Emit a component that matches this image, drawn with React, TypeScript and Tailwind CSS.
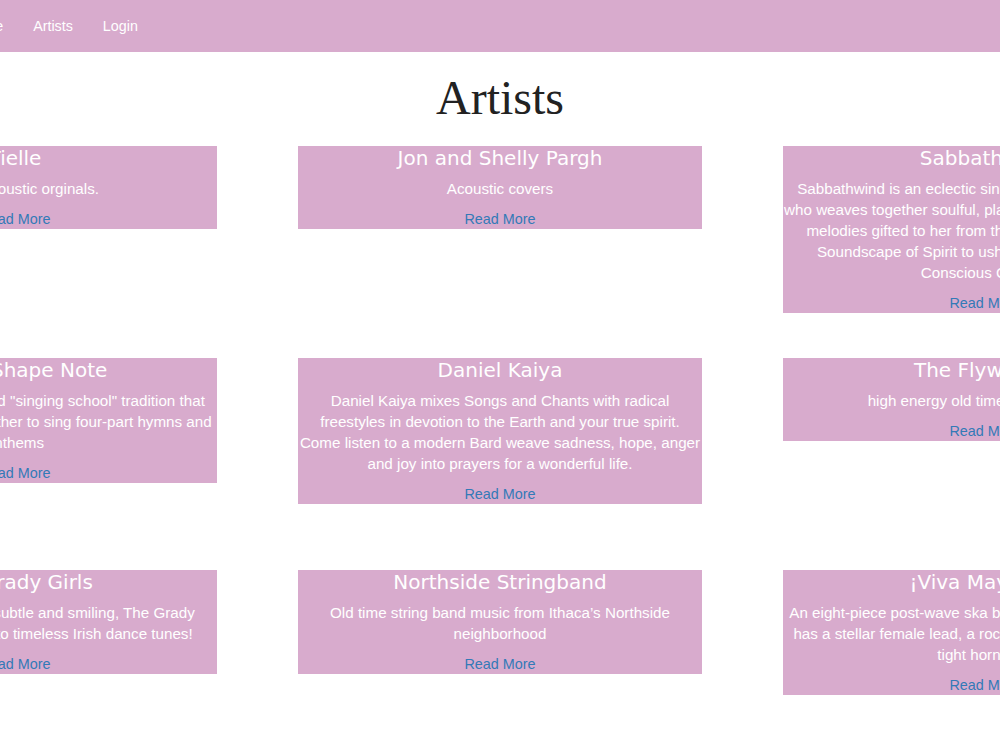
import React from 'react'

type Artist = {
  name: string
  lines: string[]
}

const artists: Artist[] = [
  { name: 'Tielle', lines: ['Soulful acoustic orginals.'] },
  { name: 'Jon and Shelly Pargh', lines: ['Acoustic covers'] },
  {
    name: 'Sabbathwind',
    lines: [
      'Sabbathwind is an eclectic singer-songwriter and healer',
      'who weaves together soulful, playful, and heartfelt medicine',
      'melodies gifted to her from the Divine Mother into the',
      'Soundscape of Spirit to usher in a bold new era of',
      'Conscious Culture.',
    ],
  },
  {
    name: 'Ithaca Shape Note',
    lines: [
      'Carrying on a 200-year-old "singing school" tradition that',
      'brings the community together to sing four-part hymns and',
      'anthems',
    ],
  },
  {
    name: 'Daniel Kaiya',
    lines: [
      'Daniel Kaiya mixes Songs and Chants with radical',
      'freestyles in devotion to the Earth and your true spirit.',
      'Come listen to a modern Bard weave sadness, hope, anger',
      'and joy into prayers for a wonderful life.',
    ],
  },
  { name: 'The Flywheels', lines: ['high energy old time country music'] },
  {
    name: 'The Grady Girls',
    lines: [
      'Lilting, lovely, sprightly, subtle and smiling, The Grady',
      'Girls breathe new life into timeless Irish dance tunes!',
    ],
  },
  {
    name: 'Northside Stringband',
    lines: ['Old time string band music from Ithaca\u2019s Northside', 'neighborhood'],
  },
  {
    name: '\u00a1Viva Mayhem!',
    lines: [
      'An eight-piece post-wave ska band from Ithaca, NY, which',
      'has a stellar female lead, a rock-solid rhythm section and',
      'tight horn line.',
    ],
  },
]

function ArtistCard({ artist }: { artist: Artist }) {
  return (
    <div className="bg-[#d8abcd] text-center text-white">
      <h3 className="font-['DejaVu_Sans',Verdana,sans-serif] text-[20px] leading-[24px] whitespace-nowrap">
        {artist.name}
      </h3>
      <p className="mt-[8px] mb-[10px] font-['Liberation_Sans',Arial,sans-serif] text-[15.2px] leading-[21px] whitespace-nowrap">
        {artist.lines.map((l, i) => (
          <React.Fragment key={i}>
            {l}
            {i < artist.lines.length - 1 && <br />}
          </React.Fragment>
        ))}
      </p>
      <a href="#" className="block font-['Liberation_Sans',Arial,sans-serif] text-[14.4px] leading-[20px] text-[#337ab7]">
        Read More
      </a>
    </div>
  )
}

export default function App() {
  return (
    <div className="min-h-screen w-full overflow-hidden bg-white">
      {/* top nav */}
      <nav className="h-[52px] bg-[#d8abcd] flex items-center font-['Liberation_Sans',Arial,sans-serif] text-[14.3px] text-white">
        <ul className="flex ml-[-50px] mt-[2px]">
          <li className="px-[15px]">Home</li>
          <li className="px-[15px]">Artists</li>
          <li className="px-[15px]">Login</li>
        </ul>
      </nav>

      <h1 className="mt-[19px] mb-[22px] text-center font-['Liberation_Serif','Times_New_Roman',serif] text-[48px] leading-[53px] text-[#222]">
        Artists
      </h1>

      {/* cards, wider than the window and centred */}
      <div className="flex justify-center">
        <div className="grid shrink-0 grid-cols-[repeat(3,404px)] gap-x-[81px] auto-rows-[212px] items-start">
          {artists.map((a, idx) => (
            <ArtistCard key={idx} artist={a} />
          ))}
        </div>
      </div>
    </div>
  )
}
